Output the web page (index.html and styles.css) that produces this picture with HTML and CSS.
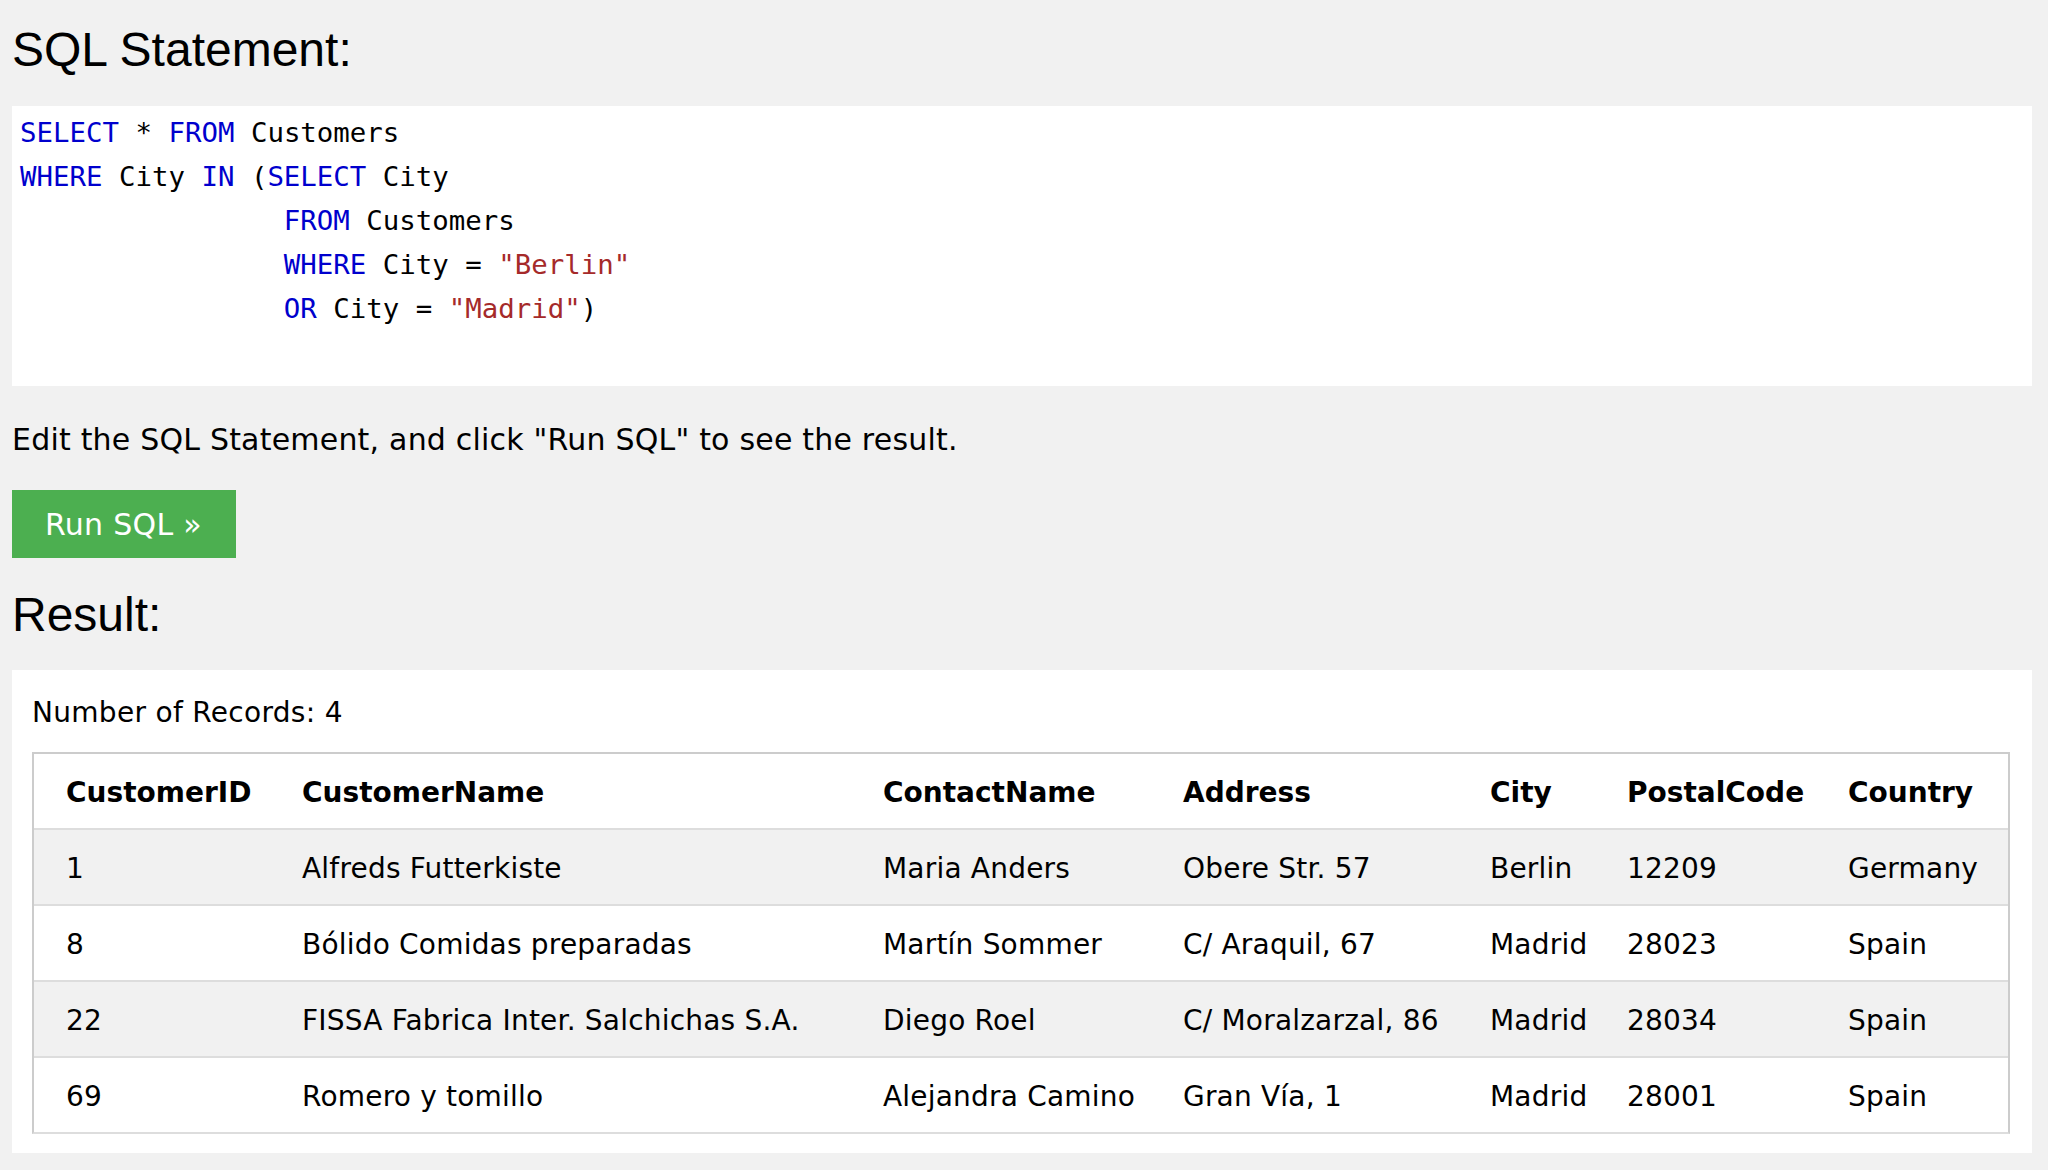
FILE: index.html
```html
<!DOCTYPE html>
<html lang="en">
<head>
<meta charset="utf-8">
<title>SQL Statement</title>
<link rel="stylesheet" href="styles.css">
</head>
<body>
<h2 class="heading heading-first">SQL Statement:</h2>
<div class="code-box">
  <div class="code-line"><span class="kw">SELECT</span><span> * </span><span class="kw">FROM</span><span> Customers</span></div>
  <div class="code-line"><span class="kw">WHERE</span><span> City </span><span class="kw">IN</span><span> (</span><span class="kw">SELECT</span><span> City</span></div>
  <div class="code-line"><span>                </span><span class="kw">FROM</span><span> Customers</span></div>
  <div class="code-line"><span>                </span><span class="kw">WHERE</span><span> City = </span><span class="str">"Berlin"</span></div>
  <div class="code-line"><span>                </span><span class="kw">OR</span><span> City = </span><span class="str">"Madrid"</span><span>)</span></div>
</div>
<p class="hint">Edit the SQL Statement, and click "Run SQL" to see the result.</p>
<button class="run-btn" type="button">Run SQL »</button>
<h2 class="heading heading-result">Result:</h2>
<div class="result-box">
  <div class="records">Number of Records: 4</div>
  <table class="result-table">
    <colgroup>
      <col class="c1"><col class="c2"><col class="c3"><col class="c4"><col class="c5"><col class="c6"><col class="c7">
    </colgroup>
    <thead>
      <tr><th>CustomerID</th><th>CustomerName</th><th>ContactName</th><th>Address</th><th>City</th><th>PostalCode</th><th>Country</th></tr>
    </thead>
    <tbody>
      <tr class="odd"><td>1</td><td>Alfreds Futterkiste</td><td>Maria Anders</td><td>Obere Str. 57</td><td>Berlin</td><td>12209</td><td>Germany</td></tr>
      <tr><td>8</td><td>Bólido Comidas preparadas</td><td>Martín Sommer</td><td>C/ Araquil, 67</td><td>Madrid</td><td>28023</td><td>Spain</td></tr>
      <tr class="odd"><td>22</td><td>FISSA Fabrica Inter. Salchichas S.A.</td><td>Diego Roel</td><td>C/ Moralzarzal, 86</td><td>Madrid</td><td>28034</td><td>Spain</td></tr>
      <tr class="last"><td>69</td><td>Romero y tomillo</td><td>Alejandra Camino</td><td>Gran Vía, 1</td><td>Madrid</td><td>28001</td><td>Spain</td></tr>
    </tbody>
  </table>
</div>
</body>
</html>
```
FILE: styles.css
```css
html, body {
  margin: 0;
  padding: 0;
  background: #f1f1f1;
}
body {
  padding: 0 16px 0 12px;
  color: #000;
  font-family: "DejaVu Sans", Verdana, sans-serif;
}
.heading {
  font-family: "Liberation Sans", Arial, sans-serif;
  font-weight: normal;
  font-size: 48px;
  line-height: 1.15;
  margin: 0;
}
.heading-first {
  padding-top: 22px;
}
.heading-result {
  margin-top: 29px;
}
.code-box {
  margin-top: 29px;
  background: #fff;
  height: 280px;
  box-sizing: border-box;
  padding: 5px 6px 0 8px;
}
.code-line {
  font-family: "DejaVu Sans Mono", Consolas, monospace;
  font-size: 27.4px;
  line-height: 44px;
  height: 44px;
  white-space: pre;
  color: #000;
}
.kw { color: #0000cd; }
.str { color: #a52a2a; }
.hint {
  font-size: 30px;
  line-height: 45px;
  letter-spacing: 0.2px;
  margin: 31px 0 0 0;
}
.run-btn {
  display: block;
  margin-top: 28px;
  width: 224px;
  height: 68px;
  box-sizing: border-box;
  padding: 13px 0 11px 33px;
  text-align: left;
  border: none;
  background: #4caf50;
  color: #fff;
  font-family: "DejaVu Sans", Verdana, sans-serif;
  font-size: 30px;
  line-height: 44px;
  letter-spacing: 0.3px;
}
.result-box {
  margin-top: 28px;
  background: #fff;
  padding: 22px 22px 19px 20px;
}
.records {
  font-size: 28px;
  line-height: 42px;
  letter-spacing: 0.3px;
  margin-bottom: 18px;
}
.result-table {
  width: 100%;
  table-layout: fixed;
  border-collapse: separate;
  border-spacing: 0;
  border: 2px solid #ccc;
  border-bottom-color: #ddd;
  font-size: 28px;
  line-height: 42px;
}
.c1 { width: 252px; }
.c2 { width: 581px; }
.c3 { width: 300px; }
.c4 { width: 307px; }
.c5 { width: 137px; }
.c6 { width: 221px; }
.result-table th,
.result-table td {
  text-align: left;
  padding: 18px 16px 14px 16px;
  border-bottom: 2px solid #ddd;
  white-space: nowrap;
  overflow: hidden;
  vertical-align: top;
}
.result-table td { letter-spacing: 0.2px; }
.result-table th { font-weight: bold; background: #fff; }
.result-table th:first-child,
.result-table td:first-child { padding-left: 32px; }
.result-table tr.odd td { background: #f1f1f1; }
.result-table tr.last td { border-bottom: none; }
```
